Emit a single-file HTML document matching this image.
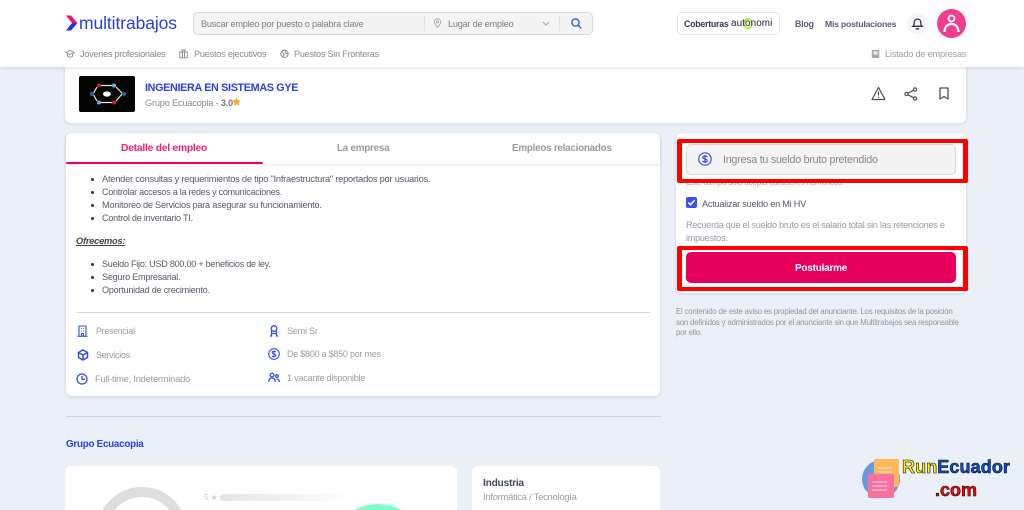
<!DOCTYPE html>
<html lang="es"><head><meta charset="utf-8"><title>Ingeniera en Sistemas GYE</title>
<style>
html,body{margin:0;padding:0;width:1024px;height:510px;overflow:hidden}
#w{width:1024px;height:510px;overflow:hidden;position:relative;background:#ebeff8;font-family:"Liberation Sans",sans-serif;color:#888}
.t{position:absolute;white-space:nowrap;line-height:14px;font-size:9.200px;letter-spacing:-.24px;filter:blur(.25px)}
.b{position:absolute;box-sizing:border-box}
svg{position:absolute;overflow:visible}
.card{background:#fff;border-radius:6px;box-shadow:0 1px 3px rgba(40,50,90,.14)}
.red{border:5px solid #f00;border-top-width:4px;border-bottom-width:4px;border-radius:2px}
</style></head><body><div id="w">

<div class="b card" style="left:65px;top:60px;width:901px;height:63px"></div>
<div class="b card" style="left:66px;top:133px;width:594px;height:263px"></div>
<div class="b card" style="left:676px;top:133px;width:290px;height:160px"></div>

<div class="b" style="left:0;top:0;width:1024px;height:67px;background:#fff;box-shadow:0 1px 4px rgba(40,50,90,.16)"></div>

<svg style="left:65px;top:14px" width="14" height="18" viewBox="0 0 14 18"><path d="M1 1.500 L6 1.500 L12.500 9 L7 9 Z" fill="#f0146e"/><path d="M12.500 9 L6 16.500 L1 16.500 L7 9 Z" fill="#1c34f0"/></svg>
<div class="t" style="left:79px;top:13px;font-size:17.500px;line-height:20px;color:#2a3fe0;letter-spacing:-.1px">multitrabajos</div>

<div class="b" style="left:193px;top:12px;width:400px;height:23px;background:#f4f4f4;border:1px solid #d8d8dc;border-radius:5px"></div>
<div class="b" style="left:424px;top:16px;width:1px;height:15px;background:#e2e2e2"></div>
<div class="b" style="left:559px;top:16px;width:1px;height:15px;background:#e2e2e2"></div>
<div class="t" style="left:201px;top:16.500px;font-size:9.200px;color:#808080">Buscar empleo por puesto o palabra clave</div>
<svg style="left:433px;top:18px" width="9" height="10" viewBox="0 0 9 10" fill="none" stroke="#a8a8a8" stroke-width=".9"><path d="M4.500 9.300C2.800 7.200 1.300 5.700 1.300 3.900a3.200 3.200 0 0 1 6.400 0C7.700 5.700 6.200 7.200 4.500 9.300Z"/><circle cx="4.500" cy="3.900" r="1.100"/></svg>
<div class="t" style="left:448px;top:16.500px;font-size:9.200px;color:#808080">Lugar de empleo</div>
<svg style="left:542px;top:21px" width="8" height="5" viewBox="0 0 8 5" fill="none" stroke="#aaa" stroke-width="1"><path d="M1 1l3 3 3-3"/></svg>
<svg style="left:571px;top:18px" width="11" height="11" viewBox="0 0 11 11" fill="none" stroke="#2c49ea" stroke-width="1.300"><circle cx="4.500" cy="4.500" r="3.600"/><path d="M7.200 7.200L10.300 10.300"/></svg>

<div class="b" style="left:677px;top:12px;width:103px;height:23px;background:#fff;border:1px solid #e6e6e9;border-radius:5px"></div>
<div class="t" style="left:684px;top:16.500px;font-size:8.800px;font-weight:bold;color:#353a4d">Coberturas</div>
<div class="b" style="left:743px;top:18px;width:10px;height:11px;border-radius:50%;border:2px solid #b6ec4c"></div>
<div class="t" style="left:731px;top:17px;font-size:9.900px;color:#252836;letter-spacing:.1px">autonomi</div>
<div class="t" style="left:795px;top:16.500px;font-size:8.800px;font-weight:bold;color:#5a5f75">Blog</div>
<div class="t" style="left:825px;top:16.500px;font-size:8.700px;font-weight:bold;color:#5a5f75">Mis postulaciones</div>
<div class="b" style="left:907px;top:13px;width:21px;height:21px;border-radius:50%;background:#f5f5f5"></div>
<svg style="left:912px;top:17px" width="11" height="13" viewBox="0 0 11 13" fill="none" stroke="#33364a" stroke-width="1.300"><path d="M1 9.300c1-.8 1.200-1.800 1.200-3.500 0-2.300 1.300-3.800 3.300-3.800s3.300 1.500 3.300 3.800c0 1.700.2 2.700 1.200 3.500Z"/><path d="M4.200 11.300c.6.900 2 .9 2.600 0" stroke-width="1.500"/></svg>
<div class="b" style="left:937px;top:9px;width:29px;height:29px;border-radius:50%;background:#f03d8c"></div>
<svg style="left:937px;top:9px" width="29" height="29" viewBox="0 0 29 29" fill="none"><circle cx="14.500" cy="9.500" r="3" stroke="#fff" stroke-width="1.800"/><path d="M7.500 23c0-5 3-8 7-8s7 3 7 8" stroke="#fff" stroke-width="2.200"/></svg>

<svg style="left:65px;top:49px" width="10" height="10" viewBox="0 0 10 10" fill="none" stroke="#888" stroke-width=".9"><path d="M.8 3.500L5 1.500l4.200 2L5 5.500Z"/><path d="M2.500 5v2.300c1.500 1 3.500 1 5 0V5"/></svg>
<div class="t" style="left:80px;top:47px;color:#8a8a8a;font-size:9.100px">Jóvenes profesionales</div>
<svg style="left:179px;top:49px" width="9" height="10" viewBox="0 0 9 10" fill="none" stroke="#888" stroke-width=".9"><rect x=".8" y="3" width="7.400" height="5.800"/><path d="M3 3V1h3v2M3.500 3v5.800M5.500 3v5.800"/></svg>
<div class="t" style="left:194px;top:47px;color:#8a8a8a;font-size:9.200px">Puestos ejecutivos</div>
<svg style="left:280px;top:49px" width="9" height="10" viewBox="0 0 9 10" fill="none" stroke="#888" stroke-width="1"><circle cx="4.500" cy="4.800" r="3.700"/><path d="M2 2.500l2 2.500-1 3M5 1.500l1 3 2 .5"/></svg>
<div class="t" style="left:294px;top:47px;color:#8a8a8a;font-size:9.100px">Puestos Sin Fronteras</div>
<svg style="left:871px;top:49px" width="9" height="10" viewBox="0 0 9 10"><rect x=".8" y="1" width="7.400" height="8" fill="#aaa"/><rect x="2.500" y="2.500" width="4" height="3" fill="#eee"/></svg>
<div class="t" style="left:885px;top:47px;color:#a0a0a0;font-size:9.250px">Listado de empresas</div>

<div class="b" style="left:79px;top:76px;width:56px;height:36px;background:#050505;border-radius:2px"></div>
<svg style="left:79px;top:76px" width="56" height="36" viewBox="0 0 56 36" fill="none"><path d="M22 9.500H33M37 11L43.500 17.500L37 25M33 26.500H22M18 25L14 18L18 11" stroke="#e8e8e8" stroke-width="1.200"/><ellipse cx="28" cy="18" rx="4" ry="2.600" fill="#fff"/><circle cx="20" cy="9.500" r="2" fill="#c8202c"/><circle cx="35" cy="9.500" r="2" fill="#6db5e0"/><circle cx="45" cy="18" r="2" fill="#2360a8"/><circle cx="35" cy="26.500" r="2" fill="#c8202c"/><circle cx="20" cy="26.500" r="2" fill="#6db5e0"/><circle cx="13" cy="18" r="2" fill="#2360a8"/></svg>
<div class="t" style="left:145px;top:81px;font-size:10.800px;letter-spacing:-.34px;font-weight:bold;color:#2a40ea">INGENIERA EN SISTEMAS GYE</div>
<div class="t" style="left:145px;top:95.500px;font-size:9.300px;color:#8b8b8b">Grupo Ecuacopia - <b style="color:#777">3.0</b></div>
<svg style="left:232px;top:97px" width="9" height="9" viewBox="0 0 10 10"><path d="M5 .5l1.400 3 3.300.4-2.400 2.200.6 3.300L5 8.200 2.100 9.400l.6-3.300L.3 3.900l3.300-.4Z" fill="#f7aa1c"/></svg>
<svg style="left:871px;top:86px" width="15" height="15" viewBox="0 0 15 15" fill="none" stroke="#4c4f60" stroke-width="1.200"><path d="M7.500 1.500L14 13.500H1Z" stroke-linejoin="round"/><path d="M7.500 5.500v4M7.500 10.800v1.200"/></svg>
<svg style="left:904px;top:87px" width="14" height="14" viewBox="0 0 14 14" fill="none" stroke="#4c4f60" stroke-width="1.200"><circle cx="11" cy="2.500" r="1.600"/><circle cx="2.500" cy="7" r="1.600"/><circle cx="11" cy="11.500" r="1.600"/><path d="M4 6.200L9.500 3.300M4 7.800l5.500 2.900"/></svg>
<svg style="left:939px;top:87px" width="10" height="13" viewBox="0 0 10 13" fill="none" stroke="#4c4f60" stroke-width="1.300"><path d="M1 1h8v11L5 9.500 1 12Z" stroke-linejoin="round"/></svg>

<div class="b" style="left:66px;top:133px;width:594px;height:31px;border-radius:6px 6px 0 0;background:#fff;box-shadow:0 1px 3px rgba(40,50,90,.12)"></div>
<div class="b" style="left:66px;top:161.500px;width:197px;height:2.500px;background:#ec0064;border-radius:2px"></div>
<div class="t" style="left:121px;top:142px;font-size:10.300px;font-weight:bold;color:#ee1e76">Detalle del empleo</div>
<div class="t" style="left:337px;top:142px;font-size:9.850px;font-weight:bold;color:#9a9a9f">La empresa</div>
<div class="t" style="left:512px;top:142px;font-size:9.850px;font-weight:bold;color:#9a9a9f">Empleos relacionados</div>

<div class="b" style="left:91px;top:178px;width:3px;height:3px;border-radius:50%;background:#333"></div>
<div class="t" style="left:102px;top:172px;color:#5a5a6a;font-size:9.300px">Atender consultas y requerimientos de tipo "Infraestructura" reportados por usuarios.</div>
<div class="b" style="left:91px;top:191px;width:3px;height:3px;border-radius:50%;background:#333"></div>
<div class="t" style="left:102px;top:185px;color:#5a5a6a;font-size:9px">Controlar accesos a la redes y comunicaciones.</div>
<div class="b" style="left:91px;top:204px;width:3px;height:3px;border-radius:50%;background:#333"></div>
<div class="t" style="left:102px;top:198px;color:#5a5a6a;font-size:9.200px">Monitoreo de Servicios para asegurar su funcionamiento.</div>
<div class="b" style="left:91px;top:217px;width:3px;height:3px;border-radius:50%;background:#333"></div>
<div class="t" style="left:102px;top:211px;color:#5a5a6a;font-size:9.100px">Control de inventario TI.</div>
<div class="t" style="left:76px;top:234px;font-weight:bold;font-style:italic;text-decoration:underline;color:#444;font-size:9.300px">Ofrecemos:</div>
<div class="b" style="left:91px;top:263px;width:3px;height:3px;border-radius:50%;background:#333"></div>
<div class="t" style="left:102px;top:257px;color:#5a5a6a;font-size:9.050px">Sueldo Fijo: USD 800.00 + beneficios de ley.</div>
<div class="b" style="left:91px;top:276px;width:3px;height:3px;border-radius:50%;background:#333"></div>
<div class="t" style="left:102px;top:270px;color:#5a5a6a;font-size:9.100px">Seguro Empresarial.</div>
<div class="b" style="left:91px;top:289px;width:3px;height:3px;border-radius:50%;background:#333"></div>
<div class="t" style="left:102px;top:283px;color:#5a5a6a;font-size:9.100px">Oportunidad de crecimiento.</div>
<div class="b" style="left:76px;top:312px;width:574px;height:1px;background:#d8d8d8"></div>

<svg style="left:77px;top:325px" width="11" height="12" viewBox="0 0 11 12" fill="none" stroke="#3a50ee" stroke-width="1.100"><path d="M2 11V1h7v10M.5 11.300h10"/><path d="M4 3.500h.8M6.200 3.500H7M4 6h.8M6.200 6H7M4.500 8.500h2V11h-2Z"/></svg>
<div class="t" style="left:96px;top:324px;color:#9a9aa5;font-size:8.800px">Presencial</div>
<svg style="left:77px;top:349px" width="12" height="12" viewBox="0 0 12 12" fill="none" stroke="#3a50ee" stroke-width="1.500"><path d="M6 1l4.500 2.500v5L6 11 1.500 8.500v-5ZM1.500 3.500L6 6l4.500-2.500M6 6v5"/></svg>
<div class="t" style="left:96px;top:348px;color:#9a9aa5;font-size:8.900px">Servicios</div>
<svg style="left:76px;top:373px" width="12" height="12" viewBox="0 0 12 12" fill="none" stroke="#3a50ee" stroke-width="1.300"><circle cx="6" cy="6" r="5"/><path d="M6 3v3.300H9"/></svg>
<div class="t" style="left:95px;top:372px;color:#9a9aa5;font-size:9.350px">Full-time, Indeterminado</div>
<svg style="left:269px;top:325px" width="10" height="12" viewBox="0 0 10 12" fill="none" stroke="#3a50ee" stroke-width="1.300"><circle cx="5" cy="3.500" r="2.800"/><path d="M2.500 5.500V11H1M7.500 5.500V11H9M2.500 8.500h5"/></svg>
<div class="t" style="left:287px;top:324px;color:#9a9aa5;font-size:9.100px">Semi Sr</div>
<svg style="left:268px;top:348px" width="12" height="12" viewBox="0 0 12 12" fill="none" stroke="#3a50ee" stroke-width="1.100"><circle cx="6" cy="6" r="5.300"/><path d="M8 4.200C7.500 3.300 4.300 3 4.200 4.600 4.100 6.200 8 5.800 7.900 7.400 7.800 9 4.600 8.800 4 7.800M6 2.500v7"/></svg>
<div class="t" style="left:287px;top:347px;color:#9a9aa5;font-size:9px">De $800 a $850 por mes</div>
<svg style="left:268px;top:372px" width="12" height="11" viewBox="0 0 12 11" fill="none" stroke="#3a50ee" stroke-width="1.300"><circle cx="4" cy="3" r="1.900"/><circle cx="9" cy="4" r="1.400"/><path d="M.8 10c0-3 1.400-4 3.200-4s3.200 1 3.200 4M8.500 7c1.500-.2 2.800.8 2.800 3"/></svg>
<div class="t" style="left:287px;top:371px;color:#9a9aa5;font-size:9.100px">1 vacante disponible</div>

<div class="b" style="left:66px;top:416px;width:595px;height:1px;background:#d2d4da"></div>
<div class="t" style="left:66px;top:437.500px;font-size:9.800px;font-weight:bold;color:#2a40ea">Grupo Ecuacopia</div>

<div class="b" style="left:65px;top:466px;width:392px;height:44px;background:#fff;border-radius:6px 6px 0 0"></div>
<div class="b" style="left:472px;top:466px;width:188px;height:44px;background:#fff;border-radius:6px 6px 0 0"></div>
<svg style="left:97px;top:487px" width="90" height="23" viewBox="0 0 90 23"><path d="M5.700 23A45 45 0 0 1 84.300 23H72.200A35 35 0 0 0 17.800 23Z" fill="#dedede"/></svg>
<div class="t" style="left:204px;top:491px;font-size:8px;letter-spacing:0;color:#ccc">5 ★</div>
<div class="b" style="left:220px;top:494px;width:135px;height:7px;border-radius:3px;background:linear-gradient(90deg,#e5e5e7,#fff)"></div>
<svg style="left:329px;top:504px" width="98" height="6" viewBox="0 0 98 6"><path d="M25.500 6A49 49 0 0 1 72.500 6Z" fill="#7fffc5"/></svg>
<div class="t" style="left:483px;top:476.500px;font-size:10.200px;font-weight:bold;color:#444a5e">Industria</div>
<div class="t" style="left:483px;top:489.500px;color:#9a9aa5;font-size:9.400px">Informática / Tecnología</div>

<div class="b" style="left:686px;top:144px;width:270px;height:31px;background:#f4f4f4;border:1px solid #d8d8dc;border-radius:5px"></div>
<svg style="left:698px;top:152px" width="14" height="14" viewBox="0 0 14 14" fill="none" stroke="#3a50ee" stroke-width="1.200"><circle cx="7" cy="7" r="6.200"/><path d="M9.300 5C8.800 3.800 4.900 3.500 4.800 5.400 4.700 7.300 9.300 6.700 9.200 8.700 9.100 10.600 5.200 10.400 4.600 9M7 3v8"/></svg>
<div class="t" style="left:723px;top:152.500px;font-size:10.700px;color:#858590">Ingresa tu sueldo bruto pretendido</div>
<div class="t" style="left:686px;top:177px;font-size:8.100px;color:#a8a8b0;line-height:12px">Este campo solo acepta caracteres numéricos.</div>
<div class="b" style="left:686px;top:197px;width:11px;height:11px;background:#3a50ee;border-radius:2px"></div>
<svg style="left:686px;top:197px" width="11" height="11" viewBox="0 0 11 11" fill="none" stroke="#fff" stroke-width="1.500"><path d="M2.300 5.500l2.200 2.300 4.200-4.700"/></svg>
<div class="t" style="left:702px;top:196.500px;font-size:9.200px;color:#5a5a6a">Actualizar sueldo en Mi HV</div>
<div class="t" style="left:686px;top:218px;font-size:9.100px;color:#9a9aa5">Recuerda que el sueldo bruto es el salario total sin las retenciones e</div>
<div class="t" style="left:686px;top:231px;font-size:9.100px;color:#9a9aa5">impuestos.</div>
<div class="b" style="left:686px;top:252px;width:270px;height:31px;background:#e8005f;border-radius:5px"></div>
<div class="t" style="left:795px;top:261.500px;font-size:10px;font-weight:bold;color:#fff">Postularme</div>

<div class="b red" style="left:677px;top:139px;width:291px;height:44px"></div>
<div class="b red" style="left:677px;top:246px;width:291px;height:45px"></div>

<div class="t" style="left:676px;top:305px;font-size:7.900px;color:#9496a2">El contenido de este aviso es propiedad del anunciante. Los requisitos de la posición</div>
<div class="t" style="left:676px;top:316px;font-size:7.950px;color:#9496a2">son definidos y administrados por el anunciante sin que Multitrabajos sea responsable</div>
<div class="t" style="left:676px;top:326px;font-size:7.900px;color:#9496a2">por ello.</div>

<div class="b" style="left:862px;top:460px;width:38px;height:38px;border-radius:50%;background:#6a98dc"></div>
<div class="b" style="left:874px;top:459px;width:25px;height:28px;background:#fdb85a;border-radius:2px"></div>
<div class="b" style="left:868px;top:474px;width:26px;height:24px;background:#f9709c;border-radius:2px"></div>
<svg style="left:868px;top:462px" width="30" height="32" viewBox="0 0 30 32" stroke="#fff" stroke-width="1" opacity=".75"><path d="M10 6h14M10 10h14M4 20h15M4 24h15M4 28h15"/></svg>
<div class="t" style="left:902px;top:456px;font-size:18px;line-height:22px;font-weight:bold;letter-spacing:.1px;color:#f7ee10;-webkit-text-stroke:.6px #111;filter:none">Run<span style="color:#0a4fd0">Ecuador</span></div>
<div class="t" style="left:935px;top:479px;font-size:18px;line-height:22px;letter-spacing:0;font-weight:bold;color:#f00;-webkit-text-stroke:.6px #111;filter:none">.com</div>
</div></body></html>
